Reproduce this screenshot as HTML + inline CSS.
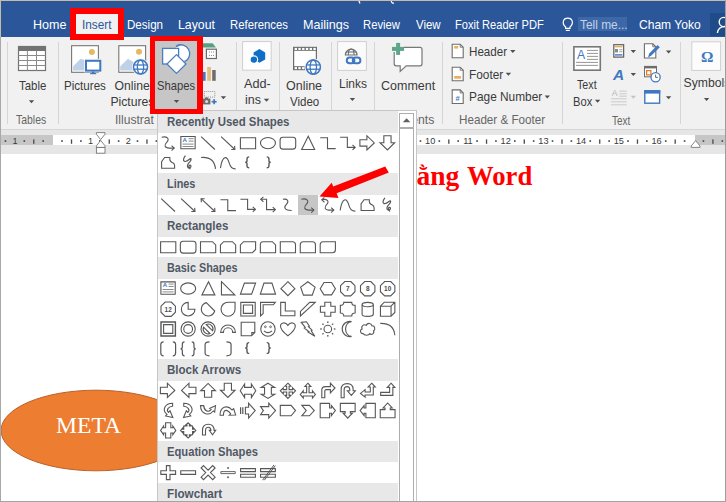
<!DOCTYPE html>
<html><head><meta charset="utf-8"><style>
html,body{margin:0;padding:0;}
body{width:726px;height:502px;overflow:hidden;position:relative;background:#fff;font-family:"Liberation Sans",sans-serif;}
svg{position:absolute;left:0;top:0;overflow:visible}
</style></head><body>
<div style="position:absolute;left:0px;top:0px;width:726px;height:37px;background:#2b579a;"></div>
<div style="position:absolute;left:0px;top:36.5px;width:726px;height:92.5px;background:#f1f1f1;"></div>
<div style="position:absolute;left:0px;top:128.5px;width:726px;height:1px;background:#d6d6d6;"></div>
<div style="position:absolute;left:0px;top:129.5px;width:726px;height:24px;background:#e6e6e6;"></div>
<div style="position:absolute;left:1px;top:135.4px;width:51.5px;height:9.3px;background:#c6c6c6;"></div>
<div style="position:absolute;left:52.5px;top:135.4px;width:642.5px;height:9.3px;background:#ffffff;"></div>
<div style="position:absolute;left:695px;top:135.4px;width:31px;height:9.3px;background:#c6c6c6;"></div>
<div style="position:absolute;left:578px;top:17.2px;width:49px;height:13.8px;background:#3d68a8;"></div>
<div style="position:absolute;left:710.2px;top:13.1px;width:15px;height:22.7px;background:#1f4b88;"></div>
<div style="position:absolute;left:72px;top:9px;width:50px;height:28px;background:#f1f1f1;"></div>
<div style="position:absolute;left:7.3px;top:41.5px;width:1px;height:82px;background:#d5d5d5;"></div>
<div style="position:absolute;left:57.5px;top:41.5px;width:1px;height:82px;background:#d5d5d5;"></div>
<div style="position:absolute;left:235.7px;top:41.5px;width:1px;height:82px;background:#d5d5d5;"></div>
<div style="position:absolute;left:279.3px;top:41.5px;width:1px;height:82px;background:#d5d5d5;"></div>
<div style="position:absolute;left:330.8px;top:41.5px;width:1px;height:82px;background:#d5d5d5;"></div>
<div style="position:absolute;left:373.7px;top:41.5px;width:1px;height:82px;background:#d5d5d5;"></div>
<div style="position:absolute;left:442.3px;top:41.5px;width:1px;height:82px;background:#d5d5d5;"></div>
<div style="position:absolute;left:561.6px;top:41.5px;width:1px;height:82px;background:#d5d5d5;"></div>
<div style="position:absolute;left:680.4px;top:41.5px;width:1px;height:82px;background:#d5d5d5;"></div>
<div style="position:absolute;left:152px;top:38px;width:49px;height:72px;background:#c6c6c6;"></div>
<svg width="726" height="502"><rect x="18.5" y="46.5" width="27" height="24" fill="#fff" stroke="#737373" stroke-width="1.2"/><rect x="18.5" y="46.5" width="27" height="4.5" fill="#737373"/><line x1="27.4" y1="50.5" x2="27.4" y2="70.5" stroke="#8a8a8a" stroke-width="1"/><line x1="36.5" y1="50.5" x2="36.5" y2="70.5" stroke="#8a8a8a" stroke-width="1"/><line x1="18.5" y1="55.5" x2="45.5" y2="55.5" stroke="#8a8a8a" stroke-width="1"/><line x1="18.5" y1="60.5" x2="45.5" y2="60.5" stroke="#8a8a8a" stroke-width="1"/><line x1="18.5" y1="65.5" x2="45.5" y2="65.5" stroke="#8a8a8a" stroke-width="1"/><polygon points="28.80,100.30 34.20,100.30 31.50,103.30" fill="#505050"/><rect x="71.6" y="45.7" width="26.8" height="26.6" fill="#fff" stroke="#777" stroke-width="1.1"/><circle cx="91.9" cy="52" r="3" fill="#e6b862"/><polygon points="73,70.6 73,66.5 80.5,58.8 84.5,60 84.5,70.6" fill="#bed1e7"/><rect x="84.2" y="58.8" width="18" height="13.5" fill="#f1f1f1"/><rect x="86" y="60.8" width="14.3" height="9.8" fill="#fff" stroke="#3f78c0" stroke-width="2"/><rect x="92" y="71.5" width="2.4" height="1.6" fill="#3f78c0"/><rect x="90.2" y="73" width="6" height="1.2" fill="#3f78c0"/><rect x="118.8" y="45.7" width="26.8" height="26.6" fill="#fff" stroke="#777" stroke-width="1.1"/><circle cx="139" cy="51.8" r="3" fill="#e6b862"/><polygon points="120.2,70.6 120.2,66.5 128,58.8 134,62.5 134,70.6" fill="#bed1e7"/><circle cx="140.5" cy="67.1" r="8.6" fill="#f1f1f1"/><circle cx="140.5" cy="67.1" r="7.0" fill="#ffffff" stroke="#3f78c0" stroke-width="1.5"/><ellipse cx="140.5" cy="67.1" rx="3.15" ry="7.0" fill="none" stroke="#3f78c0" stroke-width="1.3"/><line x1="133.5" y1="65.0" x2="147.5" y2="65.0" stroke="#3f78c0" stroke-width="1.3"/><line x1="133.5" y1="69.19999999999999" x2="147.5" y2="69.19999999999999" stroke="#3f78c0" stroke-width="1.3"/><path d="M175.8,46.6 A8.3,8.3 0 1 1 182,62" fill="#fff" stroke="#4a7cc0" stroke-width="1.2"/><circle cx="182.4" cy="53.3" r="7.8" fill="#fff"/><path d="M176.5,45.8 A8,8 0 1 1 185,61.5" fill="none" stroke="#4a7cc0" stroke-width="1.3"/><rect x="162.6" y="48.4" width="16" height="15.6" fill="#fff" stroke="#4a7cc0" stroke-width="1.3"/><polygon points="176.5,54.6 186,64 176.5,73.4 167,64" fill="#fff" stroke="#4a7cc0" stroke-width="1.3" stroke-linejoin="round"/><polygon points="176.5,56.6 184,64 176.5,71.4 169,64" fill="#fff"/><polygon points="176.5,54.6 186,64 176.5,73.4 167,64" fill="none" stroke="#c6c6c6" stroke-width="1.4" transform="translate(0,0)" opacity="0"/><polygon points="173.80,99.90 179.20,99.90 176.50,102.90" fill="#505050"/><polygon points="203,47.6 203,43.2 212.6,43.2 216,47.6" fill="#5a9e84"/><rect x="206.4" y="49.2" width="10" height="9.3" fill="#fff" stroke="#6a6a6a" stroke-width="1.2"/><line x1="209" y1="52" x2="214.5" y2="52" stroke="#777" stroke-width="0.9" stroke-dasharray="1,1"/><line x1="209" y1="55.4" x2="214.5" y2="55.4" stroke="#777" stroke-width="0.9" stroke-dasharray="1,1"/><rect x="202.6" y="72" width="3" height="8.8" fill="#3f78c0"/><rect x="207.2" y="67" width="3.7" height="13.8" fill="#e2bd7e"/><rect x="212.2" y="70" width="3.5" height="10.8" fill="#6d6d6d"/><rect x="204.3" y="91.5" width="10.6" height="5.6" fill="none" stroke="#888" stroke-width="0.9" stroke-dasharray="1,1"/><rect x="202.8" y="98.6" width="7.6" height="5.8" fill="#6d6d6d"/><rect x="205" y="97.5" width="3" height="1.5" fill="#6d6d6d"/><circle cx="206.6" cy="101.5" r="1.5" fill="#ddd"/><rect x="211.6" y="100.9" width="5" height="1.7" fill="#3f78c0"/><rect x="213.3" y="99.2" width="1.7" height="5" fill="#3f78c0"/><polygon points="220.70,96.30 226.10,96.30 223.40,99.30" fill="#505050"/><rect x="242.6" y="41.6" width="28.6" height="28.6" fill="#fdfdfd" stroke="#cfcfcf" stroke-width="1"/><polygon points="259.4,49 265.2,52.4 265.2,59.4 259.4,62.8 253.6,59.4 253.6,52.4" fill="#0f6fc6"/><circle cx="253.9" cy="59.6" r="4.3" fill="#fdfdfd"/><circle cx="253.9" cy="59.6" r="3.2" fill="#0f6fc6"/><polygon points="263.80,98.70 269.20,98.70 266.50,101.70" fill="#505050"/><rect x="293.6" y="47.4" width="22.8" height="22.2" fill="#fff" stroke="#6d6d6d" stroke-width="1.2"/><rect x="293.4" y="47" width="23.2" height="3.8" fill="#6d6d6d"/><rect x="293.4" y="66.2" width="23.2" height="3.8" fill="#6d6d6d"/><rect x="294.60" y="47.9" width="2.4" height="2.1" fill="#fff"/><rect x="294.60" y="67.1" width="2.4" height="2.1" fill="#fff"/><rect x="298.35" y="47.9" width="2.4" height="2.1" fill="#fff"/><rect x="298.35" y="67.1" width="2.4" height="2.1" fill="#fff"/><rect x="302.10" y="47.9" width="2.4" height="2.1" fill="#fff"/><rect x="302.10" y="67.1" width="2.4" height="2.1" fill="#fff"/><rect x="305.85" y="47.9" width="2.4" height="2.1" fill="#fff"/><rect x="305.85" y="67.1" width="2.4" height="2.1" fill="#fff"/><rect x="309.60" y="47.9" width="2.4" height="2.1" fill="#fff"/><rect x="309.60" y="67.1" width="2.4" height="2.1" fill="#fff"/><rect x="313.35" y="47.9" width="2.4" height="2.1" fill="#fff"/><rect x="313.35" y="67.1" width="2.4" height="2.1" fill="#fff"/><circle cx="313.3" cy="67.1" r="8.8" fill="#f1f1f1"/><circle cx="313.3" cy="67.1" r="7.1" fill="#ffffff" stroke="#3f78c0" stroke-width="1.5"/><ellipse cx="313.3" cy="67.1" rx="3.195" ry="7.1" fill="none" stroke="#3f78c0" stroke-width="1.3"/><line x1="306.2" y1="64.97" x2="320.40000000000003" y2="64.97" stroke="#3f78c0" stroke-width="1.3"/><line x1="306.2" y1="69.22999999999999" x2="320.40000000000003" y2="69.22999999999999" stroke="#3f78c0" stroke-width="1.3"/><rect x="337.6" y="41.6" width="28.8" height="28.8" fill="#fafafa" stroke="#cfcfcf" stroke-width="1"/><path d="M345.4,55 A5.8,5.8 0 0 1 357,55 Z" fill="none" stroke="#6d6d6d" stroke-width="1.2"/><path d="M348.3,55 A2.9,6 0 0 1 354.1,55" fill="none" stroke="#6d6d6d" stroke-width="1.1"/><line x1="345.8" y1="52" x2="356.6" y2="52" stroke="#6d6d6d" stroke-width="1.1"/><rect x="346.8" y="57.6" width="7.6" height="5.6" rx="2.8" fill="none" stroke="#3f78c0" stroke-width="2"/><rect x="352.8" y="57.6" width="7.6" height="5.6" rx="2.8" fill="none" stroke="#3f78c0" stroke-width="2"/><polygon points="349.70,98.00 355.10,98.00 352.40,101.00" fill="#505050"/><path d="M404,47.4 L420,47.4 Q422,47.4 422,49.4 L422,63.8 Q422,65.8 420,65.8 L406.2,65.8 L400.2,71.4 L400.2,65.8 L396.2,65.8 Q394.2,65.8 394.2,63.8 L394.2,52" fill="#fff" stroke="#777" stroke-width="1.2"/><rect x="392" y="46.9" width="12.1" height="4" fill="#5fa58a"/><rect x="396.1" y="42.9" width="4" height="12" fill="#5fa58a"/><path d="M452.2,44.2 L460.2,44.2 L463.2,47.2 L463.2,57.800000000000004 L452.2,57.800000000000004 Z" fill="#fff" stroke="#6d6d6d" stroke-width="1.1"/><path d="M460.2,44.2 L460.2,47.2 L463.2,47.2" fill="none" stroke="#6d6d6d" stroke-width="0.9"/><rect x="454.2" y="46" width="4" height="2.6" fill="#e8b060"/><path d="M452.2,67.2 L460.2,67.2 L463.2,70.2 L463.2,80.8 L452.2,80.8 Z" fill="#fff" stroke="#6d6d6d" stroke-width="1.1"/><path d="M460.2,67.2 L460.2,70.2 L463.2,70.2" fill="none" stroke="#6d6d6d" stroke-width="0.9"/><rect x="454.2" y="76" width="6.8" height="2.7" fill="#e8b060"/><path d="M452.2,89.9 L460.2,89.9 L463.2,92.9 L463.2,103.5 L452.2,103.5 Z" fill="#fff" stroke="#6d6d6d" stroke-width="1.1"/><path d="M460.2,89.9 L460.2,92.9 L463.2,92.9" fill="none" stroke="#6d6d6d" stroke-width="0.9"/><text x="457.7" y="100.5" font-family="Liberation Sans" font-weight="700" font-size="7.5" fill="#3f78c0" text-anchor="middle">#</text><polygon points="510.10,49.90 515.50,49.90 512.80,52.90" fill="#505050"/><polygon points="505.70,72.80 511.10,72.80 508.40,75.80" fill="#505050"/><polygon points="544.60,95.50 550.00,95.50 547.30,98.50" fill="#505050"/><rect x="573.9" y="46.8" width="26.4" height="23.4" fill="#fff" stroke="#777" stroke-width="1.6"/><text x="581.1" y="59.2" font-family="Liberation Sans" font-size="12.2" fill="#3f78c0" text-anchor="middle">A</text><line x1="587" y1="50.4" x2="598" y2="50.4" stroke="#8a8a8a" stroke-width="0.9"/><line x1="587" y1="53.4" x2="598" y2="53.4" stroke="#8a8a8a" stroke-width="0.9"/><line x1="587" y1="56.4" x2="598" y2="56.4" stroke="#8a8a8a" stroke-width="0.9"/><line x1="587" y1="59.4" x2="598" y2="59.4" stroke="#8a8a8a" stroke-width="0.9"/><line x1="576" y1="62.4" x2="598" y2="62.4" stroke="#8a8a8a" stroke-width="0.9"/><line x1="576" y1="65.4" x2="598" y2="65.4" stroke="#8a8a8a" stroke-width="0.9"/><polygon points="594.90,99.80 600.30,99.80 597.60,102.80" fill="#505050"/><rect x="613.8" y="44.7" width="9.8" height="12.4" fill="#fff" stroke="#666" stroke-width="1.3"/><rect x="615" y="46" width="7.4" height="1.4" fill="#e8b060"/><rect x="615" y="49" width="3" height="3.4" fill="#888"/><rect x="619.2" y="49.3" width="3.2" height="0.9" fill="#999"/><rect x="619.2" y="51.3" width="3.2" height="0.9" fill="#999"/><rect x="615" y="54.2" width="7.4" height="1.4" fill="#3f78c0"/><polygon points="630.60,50.10 636.00,50.10 633.30,53.10" fill="#505050"/><text x="618.5" y="80" font-family="Liberation Sans" font-weight="700" font-style="italic" font-size="15.5" fill="#3f78c0" text-anchor="middle">A</text><polygon points="630.60,72.90 636.00,72.90 633.30,75.90" fill="#505050"/><text x="614.6" y="96.2" font-family="Liberation Sans" font-size="8.6" fill="#b4b4b4" text-anchor="middle">A</text><line x1="619.3" y1="91.2" x2="626.7" y2="91.2" stroke="#c0c0c0" stroke-width="0.8"/><line x1="619.3" y1="93.8" x2="626.7" y2="93.8" stroke="#c0c0c0" stroke-width="0.8"/><line x1="619.3" y1="96.2" x2="626.7" y2="96.2" stroke="#c0c0c0" stroke-width="0.8"/><line x1="611" y1="98.8" x2="626.7" y2="98.8" stroke="#c0c0c0" stroke-width="0.8"/><line x1="611" y1="101.8" x2="626.7" y2="101.8" stroke="#c0c0c0" stroke-width="0.8"/><line x1="611" y1="104.8" x2="626.7" y2="104.8" stroke="#c0c0c0" stroke-width="0.8"/><polygon points="630.60,95.80 636.00,95.80 633.30,98.80" fill="#c4c4c4"/><path d="M644.4,43.8 L652.8,43.8 L655.8,46.8 L655.8,58.0 L644.4,58.0 Z" fill="#fff" stroke="#6d6d6d" stroke-width="1.1"/><path d="M652.8,43.8 L652.8,46.8 L655.8,46.8" fill="none" stroke="#6d6d6d" stroke-width="0.9"/><polygon points="648,57.6 649.2,53.4 657.6,45 659.8,47.2 651.4,55.6" fill="#3f78c0"/><polygon points="665.90,50.50 671.30,50.50 668.60,53.50" fill="#505050"/><rect x="644.5" y="66.4" width="12" height="10.4" fill="#fff" stroke="#6d6d6d" stroke-width="1"/><rect x="644.2" y="66" width="12.6" height="2.4" fill="#6d6d6d"/><rect x="646.6" y="70.6" width="4.3" height="4.3" fill="none" stroke="#e87722" stroke-width="1.2"/><circle cx="655.6" cy="77.2" r="4.6" fill="#fff" stroke="#3f78c0" stroke-width="1.3"/><path d="M655.6,74.6 L655.6,77.4 L657.8,77.4" fill="none" stroke="#555" stroke-width="0.9"/><rect x="644.8" y="90.8" width="14.8" height="12.4" fill="#fff" stroke="#3f78c0" stroke-width="1.4"/><rect x="644.1" y="90.2" width="16.2" height="3.4" fill="#3f78c0"/><polygon points="665.90,96.30 671.30,96.30 668.60,99.30" fill="#505050"/><rect x="691.8" y="41.8" width="28.8" height="28.6" fill="#fcfcfc" stroke="#d0d0d0" stroke-width="1"/><text x="707.3" y="61.8" font-family="Liberation Serif" font-weight="700" font-size="15.5" fill="#3f78c0" text-anchor="middle">Ω</text><polygon points="703.90,98.00 709.30,98.00 706.60,101.00" fill="#505050"/><path d="M565.6,27 C563.4,25.2 562.9,23 563.4,21.2 C564,19 565.8,18.2 567.8,18.2 C569.8,18.2 571.6,19 572.2,21.2 C572.7,23 572.2,25.2 570,27 L570,28.4 L565.6,28.4 Z" fill="none" stroke="#fff" stroke-width="1.2"/><line x1="565.8" y1="30.4" x2="569.8" y2="30.4" stroke="#fff" stroke-width="1.2"/><circle cx="723.8" cy="22" r="4.6" fill="none" stroke="#fff" stroke-width="1.4"/><path d="M717.4,33 C717.8,29 720.6,26.6 725,26.6" fill="none" stroke="#fff" stroke-width="1.4"/><path d="M358.5,0 L360,3.6" stroke="#fff" stroke-width="1.2"/><path d="M391,0 C391.5,3 392.5,3.5 394,3" fill="none" stroke="#fff" stroke-width="1.2"/></svg>
<svg width="726" height="502"><rect x="4.64" y="140.2" width="1.6" height="1.7" fill="#4a4a4a"/><text x="15.17" y="143.8" font-family="Liberation Sans" font-size="9.2" fill="#3a3a3a" text-anchor="middle">1</text><rect x="23.50" y="140.2" width="1.6" height="1.7" fill="#4a4a4a"/><rect x="33.13" y="139.4" width="1.3" height="4.4" fill="#4a4a4a"/><rect x="42.37" y="140.2" width="1.6" height="1.7" fill="#4a4a4a"/><rect x="61.23" y="140.2" width="1.6" height="1.7" fill="#4a4a4a"/><rect x="70.87" y="139.4" width="1.3" height="4.4" fill="#4a4a4a"/><rect x="80.10" y="140.2" width="1.6" height="1.7" fill="#4a4a4a"/><text x="90.63" y="143.8" font-family="Liberation Sans" font-size="9.2" fill="#3a3a3a" text-anchor="middle">1</text><rect x="98.96" y="140.2" width="1.6" height="1.7" fill="#4a4a4a"/><rect x="108.59" y="139.4" width="1.3" height="4.4" fill="#4a4a4a"/><rect x="117.83" y="140.2" width="1.6" height="1.7" fill="#4a4a4a"/><text x="128.36" y="143.8" font-family="Liberation Sans" font-size="9.2" fill="#3a3a3a" text-anchor="middle">2</text><rect x="136.69" y="140.2" width="1.6" height="1.7" fill="#4a4a4a"/><rect x="146.32" y="139.4" width="1.3" height="4.4" fill="#4a4a4a"/><rect x="155.56" y="140.2" width="1.6" height="1.7" fill="#4a4a4a"/><text x="166.09" y="143.8" font-family="Liberation Sans" font-size="9.2" fill="#3a3a3a" text-anchor="middle">3</text><rect x="174.42" y="140.2" width="1.6" height="1.7" fill="#4a4a4a"/><rect x="184.05" y="139.4" width="1.3" height="4.4" fill="#4a4a4a"/><rect x="193.29" y="140.2" width="1.6" height="1.7" fill="#4a4a4a"/><text x="203.82" y="143.8" font-family="Liberation Sans" font-size="9.2" fill="#3a3a3a" text-anchor="middle">4</text><rect x="212.15" y="140.2" width="1.6" height="1.7" fill="#4a4a4a"/><rect x="221.78" y="139.4" width="1.3" height="4.4" fill="#4a4a4a"/><rect x="231.02" y="140.2" width="1.6" height="1.7" fill="#4a4a4a"/><text x="241.55" y="143.8" font-family="Liberation Sans" font-size="9.2" fill="#3a3a3a" text-anchor="middle">5</text><rect x="249.88" y="140.2" width="1.6" height="1.7" fill="#4a4a4a"/><rect x="259.51" y="139.4" width="1.3" height="4.4" fill="#4a4a4a"/><rect x="268.75" y="140.2" width="1.6" height="1.7" fill="#4a4a4a"/><text x="279.28" y="143.8" font-family="Liberation Sans" font-size="9.2" fill="#3a3a3a" text-anchor="middle">6</text><rect x="287.61" y="140.2" width="1.6" height="1.7" fill="#4a4a4a"/><rect x="297.24" y="139.4" width="1.3" height="4.4" fill="#4a4a4a"/><rect x="306.48" y="140.2" width="1.6" height="1.7" fill="#4a4a4a"/><text x="317.01" y="143.8" font-family="Liberation Sans" font-size="9.2" fill="#3a3a3a" text-anchor="middle">7</text><rect x="325.34" y="140.2" width="1.6" height="1.7" fill="#4a4a4a"/><rect x="334.97" y="139.4" width="1.3" height="4.4" fill="#4a4a4a"/><rect x="344.21" y="140.2" width="1.6" height="1.7" fill="#4a4a4a"/><text x="354.74" y="143.8" font-family="Liberation Sans" font-size="9.2" fill="#3a3a3a" text-anchor="middle">8</text><rect x="363.07" y="140.2" width="1.6" height="1.7" fill="#4a4a4a"/><rect x="372.70" y="139.4" width="1.3" height="4.4" fill="#4a4a4a"/><rect x="381.94" y="140.2" width="1.6" height="1.7" fill="#4a4a4a"/><text x="392.47" y="143.8" font-family="Liberation Sans" font-size="9.2" fill="#3a3a3a" text-anchor="middle">9</text><rect x="400.80" y="140.2" width="1.6" height="1.7" fill="#4a4a4a"/><rect x="410.43" y="139.4" width="1.3" height="4.4" fill="#4a4a4a"/><rect x="419.67" y="140.2" width="1.6" height="1.7" fill="#4a4a4a"/><text x="430.20" y="143.8" font-family="Liberation Sans" font-size="9.2" fill="#3a3a3a" text-anchor="middle">10</text><rect x="438.53" y="140.2" width="1.6" height="1.7" fill="#4a4a4a"/><rect x="448.16" y="139.4" width="1.3" height="4.4" fill="#4a4a4a"/><rect x="457.40" y="140.2" width="1.6" height="1.7" fill="#4a4a4a"/><text x="467.93" y="143.8" font-family="Liberation Sans" font-size="9.2" fill="#3a3a3a" text-anchor="middle">11</text><rect x="476.26" y="140.2" width="1.6" height="1.7" fill="#4a4a4a"/><rect x="485.89" y="139.4" width="1.3" height="4.4" fill="#4a4a4a"/><rect x="495.13" y="140.2" width="1.6" height="1.7" fill="#4a4a4a"/><text x="505.66" y="143.8" font-family="Liberation Sans" font-size="9.2" fill="#3a3a3a" text-anchor="middle">12</text><rect x="513.99" y="140.2" width="1.6" height="1.7" fill="#4a4a4a"/><rect x="523.62" y="139.4" width="1.3" height="4.4" fill="#4a4a4a"/><rect x="532.86" y="140.2" width="1.6" height="1.7" fill="#4a4a4a"/><text x="543.39" y="143.8" font-family="Liberation Sans" font-size="9.2" fill="#3a3a3a" text-anchor="middle">13</text><rect x="551.72" y="140.2" width="1.6" height="1.7" fill="#4a4a4a"/><rect x="561.35" y="139.4" width="1.3" height="4.4" fill="#4a4a4a"/><rect x="570.59" y="140.2" width="1.6" height="1.7" fill="#4a4a4a"/><text x="581.12" y="143.8" font-family="Liberation Sans" font-size="9.2" fill="#3a3a3a" text-anchor="middle">14</text><rect x="589.45" y="140.2" width="1.6" height="1.7" fill="#4a4a4a"/><rect x="599.08" y="139.4" width="1.3" height="4.4" fill="#4a4a4a"/><rect x="608.32" y="140.2" width="1.6" height="1.7" fill="#4a4a4a"/><text x="618.85" y="143.8" font-family="Liberation Sans" font-size="9.2" fill="#3a3a3a" text-anchor="middle">15</text><rect x="627.18" y="140.2" width="1.6" height="1.7" fill="#4a4a4a"/><rect x="636.81" y="139.4" width="1.3" height="4.4" fill="#4a4a4a"/><rect x="646.05" y="140.2" width="1.6" height="1.7" fill="#4a4a4a"/><text x="656.58" y="143.8" font-family="Liberation Sans" font-size="9.2" fill="#3a3a3a" text-anchor="middle">16</text><rect x="664.91" y="140.2" width="1.6" height="1.7" fill="#4a4a4a"/><rect x="674.54" y="139.4" width="1.3" height="4.4" fill="#4a4a4a"/><rect x="683.78" y="140.2" width="1.6" height="1.7" fill="#4a4a4a"/><rect x="702.64" y="140.2" width="1.6" height="1.7" fill="#4a4a4a"/><rect x="712.27" y="139.4" width="1.3" height="4.4" fill="#4a4a4a"/><rect x="721.51" y="140.2" width="1.6" height="1.7" fill="#4a4a4a"/><path d="M96.4,132.6 L105,132.6 L105,134.2 L100.7,139.6 L96.4,134.2 Z" fill="#fff" stroke="#777" stroke-width="0.9"/><path d="M100.7,140.4 L105,145.8 L105,147.4 L96.4,147.4 L96.4,145.8 Z" fill="#fff" stroke="#777" stroke-width="0.9"/><rect x="96.4" y="147.6" width="8.6" height="5.6" fill="#fff" stroke="#777" stroke-width="0.9"/><path d="M695.6,140.6 L700,146 L700,147.4 L691.2,147.4 L691.2,146 Z" fill="#fff" stroke="#777" stroke-width="0.9"/></svg>
<svg width="726" height="502"><ellipse cx="96" cy="430.5" rx="95" ry="40.3" fill="#ed7d31" stroke="#b8622a" stroke-width="1"/></svg>
<div style="position:absolute;left:55.99px;top:413.90px;white-space:nowrap;font-family:'Liberation Serif';font-size:23.3px;font-weight:400;line-height:1;color:#ffffff;transform:scaleX(1.0127);transform-origin:0 0;">META</div>
<div style="position:absolute;left:416.50px;top:161.90px;white-space:nowrap;font-family:'Liberation Serif';font-size:27.5px;font-weight:700;line-height:1;color:#ff0000;">ằng</div>
<div style="position:absolute;left:466.90px;top:161.90px;white-space:nowrap;font-family:'Liberation Serif';font-size:27.5px;font-weight:700;line-height:1;color:#ff0000;transform:scaleX(0.9701);transform-origin:0 0;">Word</div>
<div style="position:absolute;left:32.79px;top:18.90px;white-space:nowrap;font-family:'Liberation Sans';font-size:12.4px;font-weight:400;line-height:1;color:#ffffff;transform:scaleX(1.0094);transform-origin:0 0;">Home</div>
<div style="position:absolute;left:81.55px;top:19.00px;white-space:nowrap;font-family:'Liberation Sans';font-size:12.4px;font-weight:400;line-height:1;color:#2b579a;transform:scaleX(0.9500);transform-origin:0 0;">Insert</div>
<div style="position:absolute;left:126.76px;top:18.90px;white-space:nowrap;font-family:'Liberation Sans';font-size:12.4px;font-weight:400;line-height:1;color:#ffffff;transform:scaleX(0.9351);transform-origin:0 0;">Design</div>
<div style="position:absolute;left:178.31px;top:18.90px;white-space:nowrap;font-family:'Liberation Sans';font-size:12.4px;font-weight:400;line-height:1;color:#ffffff;transform:scaleX(0.9917);transform-origin:0 0;">Layout</div>
<div style="position:absolute;left:230.09px;top:18.90px;white-space:nowrap;font-family:'Liberation Sans';font-size:12.4px;font-weight:400;line-height:1;color:#ffffff;transform:scaleX(0.9145);transform-origin:0 0;">References</div>
<div style="position:absolute;left:303.39px;top:18.90px;white-space:nowrap;font-family:'Liberation Sans';font-size:12.4px;font-weight:400;line-height:1;color:#ffffff;transform:scaleX(1.0136);transform-origin:0 0;">Mailings</div>
<div style="position:absolute;left:363.39px;top:18.90px;white-space:nowrap;font-family:'Liberation Sans';font-size:12.4px;font-weight:400;line-height:1;color:#ffffff;transform:scaleX(0.9100);transform-origin:0 0;">Review</div>
<div style="position:absolute;left:416.00px;top:18.90px;white-space:nowrap;font-family:'Liberation Sans';font-size:12.4px;font-weight:400;line-height:1;color:#ffffff;transform:scaleX(0.9259);transform-origin:0 0;">View</div>
<div style="position:absolute;left:455.41px;top:18.90px;white-space:nowrap;font-family:'Liberation Sans';font-size:12.4px;font-weight:400;line-height:1;color:#ffffff;transform:scaleX(0.8949);transform-origin:0 0;">Foxit Reader PDF</div>
<div style="position:absolute;left:579.70px;top:18.90px;white-space:nowrap;font-family:'Liberation Sans';font-size:12.4px;font-weight:400;line-height:1;color:#c6d2e6;transform:scaleX(0.9592);transform-origin:0 0;">Tell me...</div>
<div style="position:absolute;left:638.73px;top:18.90px;white-space:nowrap;font-family:'Liberation Sans';font-size:12.4px;font-weight:400;line-height:1;color:#ffffff;transform:scaleX(0.9726);transform-origin:0 0;">Cham Yoko</div>
<div style="position:absolute;left:18.80px;top:79.60px;white-space:nowrap;font-family:'Liberation Sans';font-size:12.2px;font-weight:400;line-height:1;color:#3a3a3a;transform:scaleX(0.9379);transform-origin:0 0;">Table</div>
<div style="position:absolute;left:63.55px;top:79.50px;white-space:nowrap;font-family:'Liberation Sans';font-size:12.2px;font-weight:400;line-height:1;color:#3a3a3a;transform:scaleX(0.9512);transform-origin:0 0;">Pictures</div>
<div style="position:absolute;left:114.50px;top:79.50px;white-space:nowrap;font-family:'Liberation Sans';font-size:12.2px;font-weight:400;line-height:1;color:#3a3a3a;">Online</div>
<div style="position:absolute;left:110.40px;top:95.60px;white-space:nowrap;font-family:'Liberation Sans';font-size:12.2px;font-weight:400;line-height:1;color:#3a3a3a;">Pictures</div>
<div style="position:absolute;left:244.00px;top:77.90px;white-space:nowrap;font-family:'Liberation Sans';font-size:12.2px;font-weight:400;line-height:1;color:#3a3a3a;transform:scaleX(1.0400);transform-origin:0 0;">Add-</div>
<div style="position:absolute;left:245.28px;top:93.80px;white-space:nowrap;font-family:'Liberation Sans';font-size:12.2px;font-weight:400;line-height:1;color:#3a3a3a;transform:scaleX(1.0214);transform-origin:0 0;">ins</div>
<div style="position:absolute;left:286.38px;top:79.80px;white-space:nowrap;font-family:'Liberation Sans';font-size:12.2px;font-weight:400;line-height:1;color:#3a3a3a;transform:scaleX(1.0235);transform-origin:0 0;">Online</div>
<div style="position:absolute;left:290.40px;top:95.50px;white-space:nowrap;font-family:'Liberation Sans';font-size:12.2px;font-weight:400;line-height:1;color:#3a3a3a;transform:scaleX(0.9452);transform-origin:0 0;">Video</div>
<div style="position:absolute;left:338.52px;top:77.90px;white-space:nowrap;font-family:'Liberation Sans';font-size:12.2px;font-weight:400;line-height:1;color:#3a3a3a;transform:scaleX(0.9815);transform-origin:0 0;">Links</div>
<div style="position:absolute;left:380.68px;top:79.80px;white-space:nowrap;font-family:'Liberation Sans';font-size:12.2px;font-weight:400;line-height:1;color:#3a3a3a;transform:scaleX(1.0250);transform-origin:0 0;">Comment</div>
<div style="position:absolute;left:468.75px;top:45.80px;white-space:nowrap;font-family:'Liberation Sans';font-size:12.2px;font-weight:400;line-height:1;color:#3a3a3a;transform:scaleX(0.9538);transform-origin:0 0;">Header</div>
<div style="position:absolute;left:468.73px;top:68.70px;white-space:nowrap;font-family:'Liberation Sans';font-size:12.2px;font-weight:400;line-height:1;color:#3a3a3a;transform:scaleX(0.9706);transform-origin:0 0;">Footer</div>
<div style="position:absolute;left:468.73px;top:91.30px;white-space:nowrap;font-family:'Liberation Sans';font-size:12.2px;font-weight:400;line-height:1;color:#3a3a3a;transform:scaleX(0.9743);transform-origin:0 0;">Page Number</div>
<div style="position:absolute;left:577.40px;top:79.30px;white-space:nowrap;font-family:'Liberation Sans';font-size:12.2px;font-weight:400;line-height:1;color:#3a3a3a;transform:scaleX(0.8773);transform-origin:0 0;">Text</div>
<div style="position:absolute;left:572.88px;top:95.50px;white-space:nowrap;font-family:'Liberation Sans';font-size:12.2px;font-weight:400;line-height:1;color:#3a3a3a;transform:scaleX(0.9150);transform-origin:0 0;">Box</div>
<div style="position:absolute;left:683.60px;top:77.00px;white-space:nowrap;font-family:'Liberation Sans';font-size:12.2px;font-weight:400;line-height:1;color:#3a3a3a;">Symbols</div>
<div style="position:absolute;left:16.00px;top:114.00px;white-space:nowrap;font-family:'Liberation Sans';font-size:12.2px;font-weight:400;line-height:1;color:#666666;transform:scaleX(0.8571);transform-origin:0 0;">Tables</div>
<div style="position:absolute;left:115.41px;top:114.00px;white-space:nowrap;font-family:'Liberation Sans';font-size:12.2px;font-weight:400;line-height:1;color:#666666;transform:scaleX(0.9895);transform-origin:0 0;">Illustrat</div>
<div style="position:absolute;left:458.84px;top:114.20px;white-space:nowrap;font-family:'Liberation Sans';font-size:12.2px;font-weight:400;line-height:1;color:#666666;transform:scaleX(0.9562);transform-origin:0 0;">Header &amp; Footer</div>
<div style="position:absolute;left:611.70px;top:114.50px;white-space:nowrap;font-family:'Liberation Sans';font-size:12.2px;font-weight:400;line-height:1;color:#666666;transform:scaleX(0.8182);transform-origin:0 0;">Text</div>
<div style="position:absolute;left:375.40px;top:114.30px;white-space:nowrap;font-family:'Liberation Sans';font-size:12.2px;font-weight:400;line-height:1;color:#666666;">Comments</div>
<div style="position:absolute;left:157px;top:110px;width:259.8px;height:392px;background:#ffffff;box-sizing:border-box;border:1px solid #c6c6c6;"></div>
<div style="position:absolute;left:158px;top:111px;width:239.5px;height:21.6px;background:#e8e8e8;"></div>
<div style="position:absolute;left:158px;top:173px;width:239.5px;height:21.6px;background:#e8e8e8;"></div>
<div style="position:absolute;left:158px;top:215.2px;width:239.5px;height:21.6px;background:#e8e8e8;"></div>
<div style="position:absolute;left:158px;top:257.4px;width:239.5px;height:21.6px;background:#e8e8e8;"></div>
<div style="position:absolute;left:158px;top:359px;width:239.5px;height:21.6px;background:#e8e8e8;"></div>
<div style="position:absolute;left:158px;top:440.9px;width:239.5px;height:21.6px;background:#e8e8e8;"></div>
<div style="position:absolute;left:158px;top:482.8px;width:239.5px;height:21.6px;background:#e8e8e8;"></div>
<div style="position:absolute;left:298.3px;top:195.3px;width:19.7px;height:19.5px;background:#c6c6c6;"></div>
<div style="position:absolute;left:399.3px;top:113px;width:14.7px;height:14.5px;background:#ffffff;box-sizing:border-box;border:1px solid #adadad;"></div>
<div style="position:absolute;left:399.3px;top:127.8px;width:14.7px;height:380px;background:#ffffff;box-sizing:border-box;border:1px solid #adadad;"></div>
<svg width="726" height="502"><polygon points="402.8,122.2 410.4,122.2 406.6,118.2" fill="#606060"/></svg>
<div style="position:absolute;left:157.08px;top:79.80px;white-space:nowrap;font-family:'Liberation Sans';font-size:12.2px;font-weight:400;line-height:1;color:#3a3a3a;transform:scaleX(0.9200);transform-origin:0 0;">Shapes</div>
<div style="position:absolute;left:166.95px;top:115.80px;white-space:nowrap;font-family:'Liberation Sans';font-size:12.0px;font-weight:700;line-height:1;color:#505865;transform:scaleX(0.9512);transform-origin:0 0;">Recently Used Shapes</div>
<div style="position:absolute;left:166.99px;top:177.80px;white-space:nowrap;font-family:'Liberation Sans';font-size:12.0px;font-weight:700;line-height:1;color:#505865;transform:scaleX(0.9067);transform-origin:0 0;">Lines</div>
<div style="position:absolute;left:166.94px;top:220.00px;white-space:nowrap;font-family:'Liberation Sans';font-size:12.0px;font-weight:700;line-height:1;color:#505865;transform:scaleX(0.9571);transform-origin:0 0;">Rectangles</div>
<div style="position:absolute;left:167.00px;top:262.20px;white-space:nowrap;font-family:'Liberation Sans';font-size:12.0px;font-weight:700;line-height:1;color:#505865;transform:scaleX(0.9026);transform-origin:0 0;">Basic Shapes</div>
<div style="position:absolute;left:166.94px;top:363.80px;white-space:nowrap;font-family:'Liberation Sans';font-size:12.0px;font-weight:700;line-height:1;color:#505865;transform:scaleX(0.9632);transform-origin:0 0;">Block Arrows</div>
<div style="position:absolute;left:166.97px;top:445.70px;white-space:nowrap;font-family:'Liberation Sans';font-size:12.0px;font-weight:700;line-height:1;color:#505865;transform:scaleX(0.9333);transform-origin:0 0;">Equation Shapes</div>
<div style="position:absolute;left:166.93px;top:487.60px;white-space:nowrap;font-family:'Liberation Sans';font-size:12.0px;font-weight:700;line-height:1;color:#505865;transform:scaleX(0.9750);transform-origin:0 0;">Flowchart</div>
<svg width="726" height="502"><g transform="translate(168.20,143.3)"><path d="M-6.5,-6 C-1.5,-7.5 2,-4.5 -1.5,-1 C-4.5,2 -3.5,4.8 1,4.8 L6,4.8" fill="none" stroke="#575757" stroke-width="1.1" stroke-linejoin="miter" /><path d="M3.37,7.25 L6,4.8 L3.37,2.35" fill="none" stroke="#575757" stroke-width="1.1" stroke-linejoin="miter" /></g><g transform="translate(188.15,143.3)"><path d="M-7.3,-6.8 H7 V5.5 H-7.3 Z" fill="#fff" stroke="#575757" stroke-width="1.1" stroke-linejoin="miter" /><text x="-3.3" y="-1.4" font-family="Liberation Sans" font-weight="700" font-size="6.2" fill="#3f78c0" text-anchor="middle">A</text><path d="M0.4,-4.6 H5.4 M0.4,-2.2 H5.4 M-5.6,0.8 H5.4 M-5.6,3.2 H5.4" fill="none" stroke="#575757" stroke-width="0.7" stroke-linejoin="miter" /></g><g transform="translate(208.10,143.3)"><path d="M-7,-6.6 L6.8,6.2" fill="none" stroke="#575757" stroke-width="1.1" stroke-linejoin="miter" /></g><g transform="translate(228.05,143.3)"><path d="M-7,-6.6 L6.8,6.2" fill="none" stroke="#575757" stroke-width="1.1" stroke-linejoin="miter" /><path d="M3.20,6.20 L6.8,6.2 L6.54,2.61" fill="none" stroke="#575757" stroke-width="1.1" stroke-linejoin="miter" /></g><g transform="translate(248.00,143.3)"><path d="M-7.6,-5.6 H7.6 V5.4 H-7.6 Z" fill="none" stroke="#575757" stroke-width="1.1" stroke-linejoin="miter" /></g><g transform="translate(267.95,143.3)"><ellipse cx="0" cy="-0.2" rx="7.5" ry="5.6" fill="none" stroke="#575757" stroke-width="1.1"/></g><g transform="translate(287.90,143.3)"><rect x="-7.8" y="-6" width="15.6" height="11.8" rx="2.8" fill="none" stroke="#575757" stroke-width="1.1"/></g><g transform="translate(307.85,143.3)"><path d="M0.4,-7 L6.8,6.2 H-6.2 Z" fill="none" stroke="#575757" stroke-width="1.1" stroke-linejoin="miter" /></g><g transform="translate(327.80,143.3)"><path d="M-7.6,-5.6 H-0.3 V5.3 H7.9" fill="none" stroke="#575757" stroke-width="1.1" stroke-linejoin="miter" /></g><g transform="translate(347.75,143.3)"><path d="M-7.6,-6 H-0.4 V4.1 H7.4" fill="none" stroke="#575757" stroke-width="1.1" stroke-linejoin="miter" /><path d="M4.77,6.55 L7.4,4.1 L4.77,1.65" fill="none" stroke="#575757" stroke-width="1.1" stroke-linejoin="miter" /></g><g transform="translate(367.70,143.3)"><path d="M-7.8,-3.6 H-0.8 V-7.6 L6.6,-0.4 L-0.8,6.6 V2.8 H-7.8 Z" fill="none" stroke="#575757" stroke-width="1.1" stroke-linejoin="miter" /></g><g transform="translate(387.65,143.3)"><path d="M-3.8,-7.6 V-0.6 H-7.6 L-0.2,6.6 L7,-0.6 H3.4 V-7.6 Z" fill="none" stroke="#575757" stroke-width="1.1" stroke-linejoin="miter" /></g><g transform="translate(168.20,163.1)"><path d="M-6.6,5.2 V-1.5 L-3.6,-5.6 H1.6 Q1.2,-1.2 4.6,-0.4 Q6.4,0.4 6.4,2.6 V5.2 Z" fill="none" stroke="#575757" stroke-width="1.1" stroke-linejoin="miter" /></g><g transform="translate(188.15,163.1)"><path d="M-2.7,-7.4 C-4.2,-5.6 -5.6,-2.8 -3.8,-1.8 C-2,-0.8 1,-3.6 2,-4.4 C3,-5 3.6,-3.4 1.6,-1.2 C-0.6,1 -1.2,3 -0.2,4.4 C1,5.6 3,4.4 2.8,2.8 C2.6,1.4 0.6,2 0.8,3.6 L2.2,6.2" fill="none" stroke="#575757" stroke-width="1.2" stroke-linejoin="miter" /></g><g transform="translate(208.10,163.1)"><path d="M-7,-5.6 Q6.2,-6.6 7.4,5.8" fill="none" stroke="#575757" stroke-width="1.1" stroke-linejoin="miter" /></g><g transform="translate(228.05,163.1)"><path d="M-7.6,5 C-5.6,-8 -1,-8 1.2,0 C2.6,5 4.6,6 7.6,5.8" fill="none" stroke="#575757" stroke-width="1.1" stroke-linejoin="miter" /></g><g transform="translate(248.00,163.1)"><path d="M1.2,-6.2 Q-1,-6.2 -1,-4.2 V-2.4 Q-1,-0.8 -2.8,-0.8 Q-1,-0.8 -1,0.8 V2.6 Q-1,4.6 1.2,4.6" fill="none" stroke="#575757" stroke-width="1.4" stroke-linejoin="miter" /></g><g transform="translate(267.95,163.1)"><path d="M-1.2,-6.2 Q1,-6.2 1,-4.2 V-2.4 Q1,-0.8 2.8,-0.8 Q1,-0.8 1,0.8 V2.6 Q1,4.6 -1.2,4.6" fill="none" stroke="#575757" stroke-width="1.4" stroke-linejoin="miter" /></g><g transform="translate(168.20,205.3)"><path d="M-7,-6.6 L6.8,6.2" fill="none" stroke="#575757" stroke-width="1.1" stroke-linejoin="miter" /></g><g transform="translate(188.15,205.3)"><path d="M-7,-6.6 L6.8,6.2" fill="none" stroke="#575757" stroke-width="1.1" stroke-linejoin="miter" /><path d="M3.20,6.20 L6.8,6.2 L6.54,2.61" fill="none" stroke="#575757" stroke-width="1.1" stroke-linejoin="miter" /></g><g transform="translate(208.10,205.3)"><path d="M-7,-6.6 L6.8,6.2" fill="none" stroke="#575757" stroke-width="1.1" stroke-linejoin="miter" /><path d="M3.20,6.20 L6.8,6.2 L6.54,2.61" fill="none" stroke="#575757" stroke-width="1.1" stroke-linejoin="miter" /><path d="M-3.40,-6.60 L-7,-6.6 L-6.74,-3.01" fill="none" stroke="#575757" stroke-width="1.1" stroke-linejoin="miter" /></g><g transform="translate(228.05,205.3)"><path d="M-7.6,-5.6 H-0.3 V5.3 H7.9" fill="none" stroke="#575757" stroke-width="1.1" stroke-linejoin="miter" /></g><g transform="translate(248.00,205.3)"><path d="M-7.6,-6 H-0.4 V4.1 H7.4" fill="none" stroke="#575757" stroke-width="1.1" stroke-linejoin="miter" /><path d="M4.77,6.55 L7.4,4.1 L4.77,1.65" fill="none" stroke="#575757" stroke-width="1.1" stroke-linejoin="miter" /></g><g transform="translate(267.95,205.3)"><path d="M-7.2,-6 H-1.4 V4.3 H7.4" fill="none" stroke="#575757" stroke-width="1.1" stroke-linejoin="miter" /><path d="M4.77,6.75 L7.4,4.3 L4.77,1.85" fill="none" stroke="#575757" stroke-width="1.1" stroke-linejoin="miter" /><path d="M-4.57,-8.45 L-7.2,-6 L-4.57,-3.55" fill="none" stroke="#575757" stroke-width="1.1" stroke-linejoin="miter" /></g><g transform="translate(287.90,205.3)"><path d="M-5,-6 C-0.5,-7 1.5,-4 -1.5,-1 C-4.5,2 -3.5,5.2 3.8,5.2" fill="none" stroke="#575757" stroke-width="1.1" stroke-linejoin="miter" /></g><g transform="translate(307.85,205.3)"><path d="M-6.5,-6 C-1.5,-7.5 2,-4.5 -1.5,-1 C-4.5,2 -3.5,4.8 1,4.8 L6,4.8" fill="none" stroke="#575757" stroke-width="1.1" stroke-linejoin="miter" /><path d="M3.37,7.25 L6,4.8 L3.37,2.35" fill="none" stroke="#575757" stroke-width="1.1" stroke-linejoin="miter" /></g><g transform="translate(327.80,205.3)"><path d="M-6,-5.5 C-1,-7 2,-4 -1,-1 C-4,2 -3,4.8 1,4.8 L6,4.8" fill="none" stroke="#575757" stroke-width="1.1" stroke-linejoin="miter" /><path d="M3.37,7.25 L6,4.8 L3.37,2.35" fill="none" stroke="#575757" stroke-width="1.1" stroke-linejoin="miter" /><path d="M-3.37,-7.95 L-6,-5.5 L-3.37,-3.05" fill="none" stroke="#575757" stroke-width="1.1" stroke-linejoin="miter" /></g><g transform="translate(347.75,205.3)"><path d="M-7.6,5 C-5.6,-8 -1,-8 1.2,0 C2.6,5 4.6,6 7.6,5.8" fill="none" stroke="#575757" stroke-width="1.1" stroke-linejoin="miter" /></g><g transform="translate(367.70,205.3)"><path d="M-6.6,5.2 V-1.5 L-3.6,-5.6 H1.6 Q1.2,-1.2 4.6,-0.4 Q6.4,0.4 6.4,2.6 V5.2 Z" fill="none" stroke="#575757" stroke-width="1.1" stroke-linejoin="miter" /></g><g transform="translate(387.65,205.3)"><path d="M-2.7,-7.4 C-4.2,-5.6 -5.6,-2.8 -3.8,-1.8 C-2,-0.8 1,-3.6 2,-4.4 C3,-5 3.6,-3.4 1.6,-1.2 C-0.6,1 -1.2,3 -0.2,4.4 C1,5.6 3,4.4 2.8,2.8 C2.6,1.4 0.6,2 0.8,3.6 L2.2,6.2" fill="none" stroke="#575757" stroke-width="1.2" stroke-linejoin="miter" /></g><g transform="translate(168.20,247.3)"><path d="M-7.6,-5.6 H7.6 V5.4 H-7.6 Z" fill="none" stroke="#575757" stroke-width="1.1" stroke-linejoin="miter" /></g><g transform="translate(188.15,247.3)"><rect x="-7.8" y="-6" width="15.6" height="11.8" rx="2.8" fill="none" stroke="#575757" stroke-width="1.1"/></g><g transform="translate(208.10,247.3)"><path d="M-7.6,-5.6 H4.4 L7.6,-2.4 V5.4 H-7.6 Z" fill="none" stroke="#575757" stroke-width="1.1" stroke-linejoin="miter" /></g><g transform="translate(228.05,247.3)"><path d="M-4.4,-5.6 H4.4 L7.6,-2.4 V5.4 H-7.6 V-2.4 Z" fill="none" stroke="#575757" stroke-width="1.1" stroke-linejoin="miter" /></g><g transform="translate(248.00,247.3)"><path d="M-4.4,-5.6 H7.6 V2.2 L4.4,5.4 H-7.6 V-2.4 Z" fill="none" stroke="#575757" stroke-width="1.1" stroke-linejoin="miter" /></g><g transform="translate(267.95,247.3)"><path d="M-4.8,-5.6 H4.4 L7.6,-2.4 V5.4 H-7.6 V-2.8 Q-7.6,-5.6 -4.8,-5.6 Z" fill="none" stroke="#575757" stroke-width="1.1" stroke-linejoin="miter" /></g><g transform="translate(287.90,247.3)"><path d="M-7.6,-5.6 H4.6 Q7.6,-5.6 7.6,-2.6 V5.4 H-7.6 Z" fill="none" stroke="#575757" stroke-width="1.1" stroke-linejoin="miter" /></g><g transform="translate(307.85,247.3)"><path d="M-4.6,-5.6 H4.6 Q7.6,-5.6 7.6,-2.6 V5.4 H-7.6 V-2.6 Q-7.6,-5.6 -4.6,-5.6 Z" fill="none" stroke="#575757" stroke-width="1.1" stroke-linejoin="miter" /></g><g transform="translate(327.80,247.3)"><path d="M-4.6,-5.6 H7.6 V2.4 Q7.6,5.4 4.6,5.4 H-7.6 V-2.6 Q-7.6,-5.6 -4.6,-5.6 Z" fill="none" stroke="#575757" stroke-width="1.1" stroke-linejoin="miter" /></g><g transform="translate(168.20,288.7)"><path d="M-7.3,-6.8 H7 V5.5 H-7.3 Z" fill="#fff" stroke="#575757" stroke-width="1.1" stroke-linejoin="miter" /><text x="-3.3" y="-1.4" font-family="Liberation Sans" font-weight="700" font-size="6.2" fill="#3f78c0" text-anchor="middle">A</text><path d="M0.4,-4.6 H5.4 M0.4,-2.2 H5.4 M-5.6,0.8 H5.4 M-5.6,3.2 H5.4" fill="none" stroke="#575757" stroke-width="0.7" stroke-linejoin="miter" /></g><g transform="translate(188.15,288.7)"><ellipse cx="0" cy="-0.2" rx="7.5" ry="5.6" fill="none" stroke="#575757" stroke-width="1.1"/></g><g transform="translate(208.10,288.7)"><path d="M0.4,-7 L6.8,6.2 H-6.2 Z" fill="none" stroke="#575757" stroke-width="1.1" stroke-linejoin="miter" /></g><g transform="translate(228.05,288.7)"><path d="M-6.6,-7 L6.8,6.2 H-6.6 Z" fill="none" stroke="#575757" stroke-width="1.1" stroke-linejoin="miter" /></g><g transform="translate(248.00,288.7)"><path d="M-3.6,-5.6 H7.6 L3.6,5.4 H-7.6 Z" fill="none" stroke="#575757" stroke-width="1.1" stroke-linejoin="miter" /></g><g transform="translate(267.95,288.7)"><path d="M-4,-5.6 H4 L7.6,5.4 H-7.6 Z" fill="none" stroke="#575757" stroke-width="1.1" stroke-linejoin="miter" /></g><g transform="translate(287.90,288.7)"><path d="M0,-7 L7,0 L0,7 L-7,0 Z" fill="none" stroke="#575757" stroke-width="1.1" stroke-linejoin="miter" /></g><g transform="translate(307.85,288.7)"><path d="M0,-7 L7.2,-1.6 L4.4,6.4 H-4.4 L-7.2,-1.6 Z" fill="none" stroke="#575757" stroke-width="1.1" stroke-linejoin="miter" /></g><g transform="translate(327.80,288.7)"><path d="M-3.8,-6.2 H3.8 L7.6,0 L3.8,6.2 H-3.8 L-7.6,0 Z" fill="none" stroke="#575757" stroke-width="1.1" stroke-linejoin="miter" /></g><g transform="translate(347.75,288.7)"><path d="M2.98,-7.21 L7.21,-2.98 L7.21,2.98 L2.98,7.21 L-2.98,7.21 L-7.21,2.98 L-7.21,-2.98 L-2.98,-7.21 Z" fill="none" stroke="#575757" stroke-width="1.1" stroke-linejoin="miter" /><text x="0" y="2.5" font-family="Liberation Sans" font-weight="700" font-size="7.0" fill="#4a4a4a" text-anchor="middle" textLength="3.6" lengthAdjust="spacingAndGlyphs">7</text></g><g transform="translate(367.70,288.7)"><path d="M2.98,-7.21 L7.21,-2.98 L7.21,2.98 L2.98,7.21 L-2.98,7.21 L-7.21,2.98 L-7.21,-2.98 L-2.98,-7.21 Z" fill="none" stroke="#575757" stroke-width="1.1" stroke-linejoin="miter" /><text x="0" y="2.5" font-family="Liberation Sans" font-weight="700" font-size="7.0" fill="#4a4a4a" text-anchor="middle" textLength="3.6" lengthAdjust="spacingAndGlyphs">8</text></g><g transform="translate(387.65,288.7)"><path d="M2.98,-7.21 L7.21,-2.98 L7.21,2.98 L2.98,7.21 L-2.98,7.21 L-7.21,2.98 L-7.21,-2.98 L-2.98,-7.21 Z" fill="none" stroke="#575757" stroke-width="1.1" stroke-linejoin="miter" /><text x="0" y="2.5" font-family="Liberation Sans" font-weight="700" font-size="7.0" fill="#4a4a4a" text-anchor="middle" textLength="7.2" lengthAdjust="spacingAndGlyphs">10</text></g><g transform="translate(168.20,309.2)"><path d="M2.98,-7.21 L7.21,-2.98 L7.21,2.98 L2.98,7.21 L-2.98,7.21 L-7.21,2.98 L-7.21,-2.98 L-2.98,-7.21 Z" fill="none" stroke="#575757" stroke-width="1.1" stroke-linejoin="miter" /><text x="0" y="2.5" font-family="Liberation Sans" font-weight="700" font-size="7.0" fill="#4a4a4a" text-anchor="middle" textLength="7.2" lengthAdjust="spacingAndGlyphs">12</text></g><g transform="translate(188.15,309.2)"><path d="M0,0 H6.8 A6.8,6.8 0 1 1 0,-6.8 Z" fill="none" stroke="#575757" stroke-width="1.1" stroke-linejoin="miter" /></g><g transform="translate(208.10,309.2)"><path d="M-1.8,-6.6 A6.8,6.8 0 1 0 6.6,1.8 Z" fill="none" stroke="#575757" stroke-width="1.1" stroke-linejoin="miter" /></g><g transform="translate(228.05,309.2)"><path d="M7,-7 V0 A7,7 0 1 1 0,-7 Z" fill="none" stroke="#575757" stroke-width="1.1" stroke-linejoin="miter" /></g><g transform="translate(248.00,309.2)"><path d="M-7.2,-6.8 H7.2 V6.8 H-7.2 Z" fill="none" stroke="#575757" stroke-width="1.1" stroke-linejoin="miter" /><path d="M-4.6,-4.2 H4.6 V4.2 H-4.6 Z" fill="none" stroke="#575757" stroke-width="1.1" stroke-linejoin="miter" /></g><g transform="translate(267.95,309.2)"><path d="M-7.4,6.8 V-6.8 H7.4 L5.4,-4.4 H-4.8 V4.2 Z" fill="none" stroke="#575757" stroke-width="1.1" stroke-linejoin="miter" /></g><g transform="translate(287.90,309.2)"><path d="M-7.2,-6.8 H-2.6 V1.8 H7 V6.6 H-7.2 Z" fill="none" stroke="#575757" stroke-width="1.1" stroke-linejoin="miter" /></g><g transform="translate(307.85,309.2)"><path d="M-7.4,6.8 V2.2 L1.8,-6.8 H7.4 Z" fill="none" stroke="#575757" stroke-width="1.1" stroke-linejoin="miter" /></g><g transform="translate(327.80,309.2)"><path d="M-3,-7 H3 V-3 H7.4 V3 H3 V7 H-3 V3 H-7.4 V-3 H-3 Z" fill="none" stroke="#575757" stroke-width="1.1" stroke-linejoin="miter" /></g><g transform="translate(347.75,309.2)"><path d="M-4,-6.8 H4 Q4,-3.8 7.4,-3.8 V3.8 Q4,3.8 4,6.8 H-4 Q-4,3.8 -7.4,3.8 V-3.8 Q-4,-3.8 -4,-6.8 Z" fill="none" stroke="#575757" stroke-width="1.1" stroke-linejoin="miter" /></g><g transform="translate(367.70,309.2)"><path d="M-5.6,-4.4 V5 A5.6,2.2 0 0 0 5.6,5 V-4.4" fill="none" stroke="#575757" stroke-width="1.1" stroke-linejoin="miter" /><ellipse cx="0" cy="-4.6" rx="5.6" ry="2.2" fill="none" stroke="#575757" stroke-width="1.1"/></g><g transform="translate(387.65,309.2)"><path d="M-7.2,-3 H3.4 V7 H-7.2 Z M-7.2,-3 L-3.4,-7 H7.2 V3.2 L3.4,7 M3.4,-3 L7.2,-7" fill="none" stroke="#575757" stroke-width="1.1" stroke-linejoin="miter" /></g><g transform="translate(168.20,329.0)"><path d="M-7.2,-7 H7.2 V7 H-7.2 Z" fill="none" stroke="#575757" stroke-width="1.4" stroke-linejoin="miter" /><path d="M-4.6,-4.4 H4.6 V4.4 H-4.6 Z" fill="none" stroke="#575757" stroke-width="1.1" stroke-linejoin="miter" /></g><g transform="translate(188.15,329.0)"><circle cx="0" cy="0" r="7.1" fill="none" stroke="#575757" stroke-width="1.1"/><circle cx="0" cy="0" r="4.4" fill="none" stroke="#575757" stroke-width="1.1"/></g><g transform="translate(208.10,329.0)"><circle cx="0" cy="0" r="7.1" fill="none" stroke="#575757" stroke-width="1.1"/><path d="M-1.8,-4.5 L4.5,1.8 A4.8,4.8 0 0 0 -1.8,-4.5 Z" fill="none" stroke="#575757" stroke-width="1.1" stroke-linejoin="miter" /><path d="M1.8,4.5 L-4.5,-1.8 A4.8,4.8 0 0 0 1.8,4.5 Z" fill="none" stroke="#575757" stroke-width="1.1" stroke-linejoin="miter" /></g><g transform="translate(228.05,329.0)"><path d="M-7.4,3.4 A7.4,7.4 0 0 1 7.4,3.4 H4.6 A4.6,4.6 0 0 0 -4.6,3.4 Z" fill="none" stroke="#575757" stroke-width="1.1" stroke-linejoin="miter" /></g><g transform="translate(248.00,329.0)"><path d="M-6.8,-6.8 H6.8 V3.6 L3.6,6.8 H-6.8 Z M6.8,3.6 H3.8 V6.8" fill="none" stroke="#575757" stroke-width="1.1" stroke-linejoin="miter" /></g><g transform="translate(267.95,329.0)"><circle cx="0" cy="0" r="7.2" fill="none" stroke="#575757" stroke-width="1.1"/><circle cx="-2.6" cy="-2.2" r="0.9" fill="none" stroke="#606060" stroke-width="0.9"/><circle cx="2.6" cy="-2.2" r="0.9" fill="none" stroke="#606060" stroke-width="0.9"/><path d="M-4,1.8 Q0,5.4 4,1.8" fill="none" stroke="#575757" stroke-width="1.1" stroke-linejoin="miter" /></g><g transform="translate(287.90,329.0)"><path d="M0,6.8 C-4,3.8 -7.4,1 -7.4,-3 C-7.4,-6.4 -2.6,-7.6 0,-3.6 C2.6,-7.6 7.4,-6.4 7.4,-3 C7.4,1 4,3.8 0,6.8 Z" fill="none" stroke="#575757" stroke-width="1.1" stroke-linejoin="miter" /></g><g transform="translate(307.85,329.0)"><path d="M-6.6,-6.6 L-1.4,-7.2 L1.6,-2.8 L0.6,-2.4 L4.2,1.2 L3.4,1.8 L7,7.2 L0.2,3 L1,2.6 L-3.6,-1 L-2.6,-1.6 Z" fill="none" stroke="#575757" stroke-width="1.1" stroke-linejoin="miter" /></g><g transform="translate(327.80,329.0)"><circle cx="0" cy="0" r="3.8" fill="none" stroke="#575757" stroke-width="1.1"/><rect x="-0.7" y="-7.6" width="1.4" height="1.6" fill="#606060" transform="rotate(0)"/><rect x="-0.7" y="-7.6" width="1.4" height="1.6" fill="#606060" transform="rotate(45)"/><rect x="-0.7" y="-7.6" width="1.4" height="1.6" fill="#606060" transform="rotate(90)"/><rect x="-0.7" y="-7.6" width="1.4" height="1.6" fill="#606060" transform="rotate(135)"/><rect x="-0.7" y="-7.6" width="1.4" height="1.6" fill="#606060" transform="rotate(180)"/><rect x="-0.7" y="-7.6" width="1.4" height="1.6" fill="#606060" transform="rotate(225)"/><rect x="-0.7" y="-7.6" width="1.4" height="1.6" fill="#606060" transform="rotate(270)"/><rect x="-0.7" y="-7.6" width="1.4" height="1.6" fill="#606060" transform="rotate(315)"/></g><g transform="translate(347.75,329.0)"><path d="M3.8,-7.4 A7.6,7.6 0 1 0 3.8,7.4 A6,7.4 0 0 1 3.8,-7.4 Z" fill="none" stroke="#575757" stroke-width="1.1" stroke-linejoin="miter" /></g><g transform="translate(367.70,329.0)"><path d="M-4.6,4.6 C-7.8,4.6 -8,0.6 -5.6,0 C-7,-3 -3.4,-5.4 -1.4,-3.6 C-0.4,-6.4 3.6,-6.2 4.2,-3.2 C7.4,-3.6 8,0.8 5.8,1.8 C7.2,4.4 3.8,6.4 2.2,4.6 C0.8,6.8 -3.2,6.6 -4.6,4.6 Z" fill="none" stroke="#575757" stroke-width="1.1" stroke-linejoin="miter" /></g><g transform="translate(387.65,329.0)"><path d="M-7.4,-5.6 Q6,-6 7.2,6.2" fill="none" stroke="#575757" stroke-width="1.1" stroke-linejoin="miter" /></g><g transform="translate(168.20,348.8)"><path d="M-4.6,-7 Q-7.4,-7 -7.4,-4.2 V4.2 Q-7.4,7 -4.6,7 M4.6,-7 Q7.4,-7 7.4,-4.2 V4.2 Q7.4,7 4.6,7" fill="none" stroke="#575757" stroke-width="1.2" stroke-linejoin="miter" /></g><g transform="translate(188.15,348.8)"><path d="M-3.6,-7 Q-5.8,-7 -5.8,-4.8 V-2 Q-5.8,0 -7.6,0 Q-5.8,0 -5.8,2 V4.8 Q-5.8,7 -3.6,7 M3.6,-7 Q5.8,-7 5.8,-4.8 V-2 Q5.8,0 7.6,0 Q5.8,0 5.8,2 V4.8 Q5.8,7 3.6,7" fill="none" stroke="#575757" stroke-width="1.2" stroke-linejoin="miter" /></g><g transform="translate(208.10,348.8)"><path d="M1.4,-7 Q-3,-7 -3,-4.2 V4.2 Q-3,7 1.4,7" fill="none" stroke="#575757" stroke-width="1.2" stroke-linejoin="miter" /></g><g transform="translate(228.05,348.8)"><path d="M-1.6,-7 Q3,-7 3,-4.2 V4.2 Q3,7 -1.6,7" fill="none" stroke="#575757" stroke-width="1.2" stroke-linejoin="miter" /></g><g transform="translate(248.00,348.8)"><path d="M1.2,-6.2 Q-1,-6.2 -1,-4.2 V-2.4 Q-1,-0.8 -2.8,-0.8 Q-1,-0.8 -1,0.8 V2.6 Q-1,4.6 1.2,4.6" fill="none" stroke="#575757" stroke-width="1.4" stroke-linejoin="miter" /></g><g transform="translate(267.95,348.8)"><path d="M-1.2,-6.2 Q1,-6.2 1,-4.2 V-2.4 Q1,-0.8 2.8,-0.8 Q1,-0.8 1,0.8 V2.6 Q1,4.6 -1.2,4.6" fill="none" stroke="#575757" stroke-width="1.4" stroke-linejoin="miter" /></g><g transform="translate(168.20,390.8)"><path d="M-7.8,-3.6 H-0.8 V-7.6 L6.6,-0.4 L-0.8,6.6 V2.8 H-7.8 Z" fill="none" stroke="#575757" stroke-width="1.1" stroke-linejoin="miter" /></g><g transform="translate(188.15,390.8)"><path d="M7.8,-3.6 H0.8 V-7.6 L-6.6,-0.4 L0.8,6.6 V2.8 H7.8 Z" fill="none" stroke="#575757" stroke-width="1.1" stroke-linejoin="miter" /></g><g transform="translate(208.10,390.8)"><path d="M-3.6,6.4 V-0.2 H-7.4 L0,-7.4 L7.4,-0.2 H3.6 V6.4 Z" fill="none" stroke="#575757" stroke-width="1.1" stroke-linejoin="miter" /></g><g transform="translate(228.05,390.8)"><path d="M-3.8,-7.6 V-0.6 H-7.6 L-0.2,6.6 L7,-0.6 H3.4 V-7.6 Z" fill="none" stroke="#575757" stroke-width="1.1" stroke-linejoin="miter" /></g><g transform="translate(248.00,390.8)"><path d="M-7.8,0 L-3.4,-6.8 V-3.4 H3.4 V-6.8 L7.8,0 L3.4,6.8 V3.4 H-3.4 V6.8 Z" fill="none" stroke="#575757" stroke-width="1.1" stroke-linejoin="miter" /></g><g transform="translate(267.95,390.8)"><path d="M0,-7.6 L6.8,-3.4 H3.4 V3.4 H6.8 L0,7.6 L-6.8,3.4 H-3.4 V-3.4 H-6.8 Z" fill="none" stroke="#575757" stroke-width="1.1" stroke-linejoin="miter" /></g><g transform="translate(287.90,390.8)"><path d="M0,-7.6 L3,-4.6 H1.2 V-1.2 H4.6 V-3 L7.6,0 L4.6,3 V1.2 H1.2 V4.6 H3 L0,7.6 L-3,4.6 H-1.2 V1.2 H-4.6 V3 L-7.6,0 L-4.6,-3 V-1.2 H-1.2 V-4.6 H-3 Z" fill="none" stroke="#575757" stroke-width="1.1" stroke-linejoin="miter" /></g><g transform="translate(307.85,390.8)"><path d="M0,-7.6 L3,-4.4 H1.2 V2 H4.6 V0 L7.6,3.6 L4.6,7.2 V5.2 H-4.6 V7.2 L-7.6,3.6 L-4.6,0 V2 H-1.2 V-4.4 H-3 Z" fill="none" stroke="#575757" stroke-width="1.1" stroke-linejoin="miter" /></g><g transform="translate(327.80,390.8)"><path d="M-6,7 V-0.6 Q-6,-4.2 -2.4,-4.2 H2.6 V-7.6 L7.2,-2.8 L2.6,2 V-1.2 H-1.6 Q-3,-1.2 -3,0.4 V7 Z" fill="none" stroke="#575757" stroke-width="1.1" stroke-linejoin="miter" /></g><g transform="translate(347.75,390.8)"><path d="M-6.6,7 V-1.2 Q-6.6,-7.2 -0.6,-7.2 Q5.4,-7.2 5.4,-1.2 V0 H7.6 L3.6,4.6 L-0.4,0 H2 V-1.2 Q2,-4.2 -0.6,-4.2 Q-3.6,-4.2 -3.6,-1.2 V7 Z" fill="none" stroke="#575757" stroke-width="1.1" stroke-linejoin="miter" /></g><g transform="translate(367.70,390.8)"><path d="M4,-7.6 L7.6,-3.8 H5.6 V4.2 H-2.6 V6.4 L-7.2,2.6 L-2.6,-1.2 V1.2 H2.6 V-3.8 H0.4 Z" fill="none" stroke="#575757" stroke-width="1.1" stroke-linejoin="miter" /></g><g transform="translate(387.65,390.8)"><path d="M3.4,-7.6 L7.2,-3.4 H5.2 V4.6 H-7 V1.6 H2 V-3.4 H-0.4 Z" fill="none" stroke="#575757" stroke-width="1.1" stroke-linejoin="miter" /></g><g transform="translate(168.20,410.6)"><path d="M4.4,-7.4 V-4.4 C0.6,-4.2 -2.4,-1 0.2,1.8 L1.8,0.2 L4.6,7 L-2.6,5.4 L-1.2,3.8 C-6.6,-0.6 -3.4,-7.4 4.4,-7.4 Z" fill="none" stroke="#575757" stroke-width="1.1" stroke-linejoin="miter" /></g><g transform="translate(188.15,410.6)"><path d="M-4.4,-7.4 V-4.4 C-0.6,-4.2 2.4,-1 -0.2,1.8 L-1.8,0.2 L-4.6,7 L2.6,5.4 L1.2,3.8 C6.6,-0.6 3.4,-7.4 -4.4,-7.4 Z" fill="none" stroke="#575757" stroke-width="1.1" stroke-linejoin="miter" /></g><g transform="translate(208.10,410.6)"><path d="M-7.6,-5 H-4.4 C-4,0 0,2.4 3,-1 L1.6,-2.2 L7.4,-5 L6.6,1.4 L5.2,0.4 C1.4,5.4 -7.4,4.4 -7.6,-5 Z" fill="none" stroke="#575757" stroke-width="1.1" stroke-linejoin="miter" /></g><g transform="translate(228.05,410.6)"><path d="M-8,4.6 C-8,-3.4 -1,-6.6 4,-0.6 L5.6,-2 L7.6,4.4 L1.2,4.6 L2.6,3.2 C-0.8,-1.6 -4.6,-1.6 -4.6,4.6 Z" fill="none" stroke="#575757" stroke-width="1.1" stroke-linejoin="miter" /></g><g transform="translate(248.00,410.6)"><path d="M-2.6,-3.4 H0.6 V-7.4 L7.2,0 L0.6,7.4 V3.4 H-2.6 Z" fill="none" stroke="#575757" stroke-width="1.1" stroke-linejoin="miter" /><path d="M-7.4,-3.4 V3.4 M-5.2,-3.4 V3.4" fill="none" stroke="#575757" stroke-width="1.2" stroke-linejoin="miter" /></g><g transform="translate(267.95,410.6)"><path d="M-7.4,-4 H0.8 V-7.4 L7.6,0 L0.8,7.4 V4 H-7.4 L-4.6,0 Z" fill="none" stroke="#575757" stroke-width="1.1" stroke-linejoin="miter" /></g><g transform="translate(287.90,410.6)"><path d="M-7.6,-5.2 H3.2 L7.6,0 L3.2,5.2 H-7.6 Z" fill="none" stroke="#575757" stroke-width="1.1" stroke-linejoin="miter" /></g><g transform="translate(307.85,410.6)"><path d="M-6,-5.2 H1.6 L6.4,0 L1.6,5.2 H-6 L-1.6,0 Z" fill="none" stroke="#575757" stroke-width="1.1" stroke-linejoin="miter" /></g><g transform="translate(327.80,410.6)"><path d="M-7.6,-7.2 H1.8 V-2.6 H3.6 V-5 L7.6,0 L3.6,5 V2.6 H1.8 V7.2 H-7.6 Z" fill="none" stroke="#575757" stroke-width="1.1" stroke-linejoin="miter" /></g><g transform="translate(347.75,410.6)"><path d="M-7.4,-7.2 H7.4 V1 H2.6 V2.6 H4.6 L0,7.6 L-4.6,2.6 H-2.6 V1 H-7.4 Z" fill="none" stroke="#575757" stroke-width="1.1" stroke-linejoin="miter" /></g><g transform="translate(367.70,410.6)"><path d="M7.6,-7.2 H-1.8 V-2.6 H-3.6 V-5 L-7.6,0 L-3.6,5 V2.6 H-1.8 V7.2 H7.6 Z" fill="none" stroke="#575757" stroke-width="1.1" stroke-linejoin="miter" /></g><g transform="translate(387.65,410.6)"><path d="M-7.4,7.2 H7.4 V-1 H2.6 V-2.6 H4.6 L0,-7.6 L-4.6,-2.6 H-2.6 V-1 H-7.4 Z" fill="none" stroke="#575757" stroke-width="1.1" stroke-linejoin="miter" /></g><g transform="translate(168.20,430.4)"><path d="M-2.6,-7.6 H2.6 V-2.6 H4.6 V-4.4 L7.6,0 L4.6,4.4 V2.6 H2.6 V7.6 H-2.6 V2.6 H-4.6 V4.4 L-7.6,0 L-4.6,-4.4 V-2.6 H-2.6 Z" fill="none" stroke="#575757" stroke-width="1.1" stroke-linejoin="miter" /></g><g transform="translate(188.15,430.4)"><path d="M0,-7.6 L2.4,-5.4 H1.2 V-4.4 H4.4 V-1.2 H5.4 V-2.4 L7.6,0 L5.4,2.4 V1.2 H4.4 V4.4 H1.2 V5.4 H2.4 L0,7.6 L-2.4,5.4 H-1.2 V4.4 H-4.4 V1.2 H-5.4 V2.4 L-7.6,0 L-5.4,-2.4 V-1.2 H-4.4 V-4.4 H-1.2 V-5.4 H-2.4 Z" fill="none" stroke="#575757" stroke-width="1.1" stroke-linejoin="miter" /></g><g transform="translate(208.10,430.4)"><path d="M-5.6,4.6 V0 Q-5.6,-6.2 0.2,-6.2 Q6,-6.2 6,0 H7.6 L4.4,4.4 L1.2,0 H2.8 Q2.8,-3.2 0.2,-3.2 Q-2.6,-3.2 -2.6,0 V4.6 Z" fill="none" stroke="#575757" stroke-width="1.1" stroke-linejoin="miter" /></g><g transform="translate(168.20,472.6)"><path d="M-1.8,-7 H1.8 V-1.8 H7.4 V1.8 H1.8 V7 H-1.8 V1.8 H-7.4 V-1.8 H-1.8 Z" fill="none" stroke="#575757" stroke-width="1.1" stroke-linejoin="miter" /></g><g transform="translate(188.15,472.6)"><path d="M-7.4,-1.8 H7.4 V1.8 H-7.4 Z" fill="none" stroke="#575757" stroke-width="1.1" stroke-linejoin="miter" /></g><g transform="translate(208.10,472.6)"><path d="M-4.6,-7 L0,-2.4 L4.6,-7 L7,-4.6 L2.4,0 L7,4.6 L4.6,7 L0,2.4 L-4.6,7 L-7,4.6 L-2.4,0 L-7,-4.6 Z" fill="none" stroke="#575757" stroke-width="1.1" stroke-linejoin="miter" /></g><g transform="translate(228.05,472.6)"><path d="M-7.2,-1 H7.2 V1 H-7.2 Z" fill="none" stroke="#575757" stroke-width="0.9" stroke-linejoin="miter" /><circle cx="0" cy="-4.6" r="1" fill="#606060"/><circle cx="0" cy="4.6" r="1" fill="#606060"/></g><g transform="translate(248.00,472.6)"><path d="M-7.4,-4 H7.4 V-1 H-7.4 Z M-7.4,1.6 H7.4 V4.6 H-7.4 Z" fill="none" stroke="#575757" stroke-width="1.1" stroke-linejoin="miter" /></g><g transform="translate(267.95,472.6)"><path d="M-7.4,-4 H7.4 V-1 H-7.4 Z M-7.4,1.6 H7.4 V4.6 H-7.4 Z" fill="none" stroke="#575757" stroke-width="1.1" stroke-linejoin="miter" /><path d="M-5.4,7.6 L6,-7.6 M-3.6,7.6 L7.4,-7" fill="none" stroke="#575757" stroke-width="1.0" stroke-linejoin="miter" /></g></svg>
<div style="position:absolute;left:70px;top:8px;width:54px;height:32px;background:transparent;box-sizing:border-box;border:6px solid #ff0000;"></div>
<div style="position:absolute;left:150.1px;top:36px;width:53.1px;height:77.8px;background:transparent;box-sizing:border-box;border-style:solid;border-color:#ff0000;border-width:5.5px 6.2px 5.8px 5.8px;"></div>
<svg width="726" height="502"><polygon points="319.5,196.4 331.7,182.7 333.2,186.6 385.2,166.6 388.8,172.4 336.6,193.2 338.5,197.9" fill="#ff0000"/></svg>
<div style="position:absolute;left:0px;top:0px;width:726px;height:1px;background:#c8bca8;"></div>
<div style="position:absolute;left:0px;top:0px;width:1px;height:37px;background:#c8bca8;"></div>
<div style="position:absolute;left:0px;top:37px;width:1px;height:465px;background:#a8a8a8;"></div>
<div style="position:absolute;left:725px;top:0px;width:1px;height:502px;background:#9c9c9c;"></div>
<div style="position:absolute;left:0px;top:500.5px;width:726px;height:1.5px;background:#a4a4a4;"></div>
</body></html>
